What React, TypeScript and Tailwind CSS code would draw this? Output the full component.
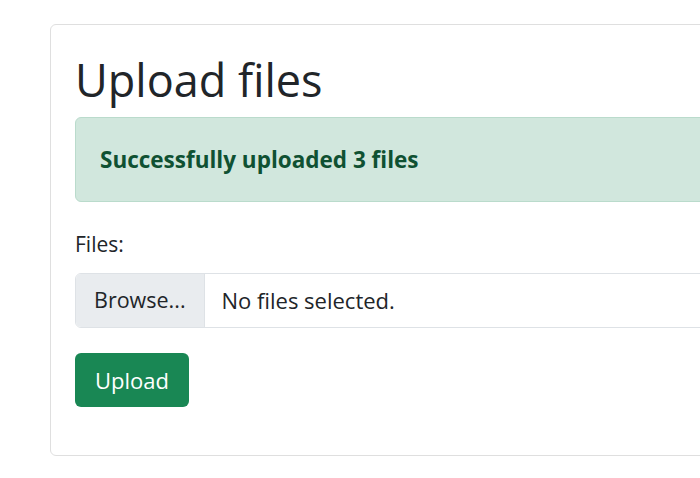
export default function App() {
  return (
    <div className="min-h-screen w-full overflow-hidden bg-white font-['Open_Sans',sans-serif] text-[#212529]">
      <div className="ml-[50px] mt-[24px] w-[720px] rounded-[6px] border border-[#dfdfdf] px-6 pt-[28px] pb-[48px]">
        <h1 className="mb-[10px] text-[45px] leading-[54px] font-normal">Upload files</h1>

        <div className="rounded-[6px] border border-[#badbcc] bg-[#d1e7dd] px-6 py-[27px] text-[22.5px] leading-[29px] font-bold text-[#0f5132]">
          Successfully uploaded 3 files
        </div>

        <form className="mt-[27px]">
          <label className="block text-[21px] leading-[31px]">Files:</label>
          <div className="mt-[13px] flex h-[55px] overflow-hidden rounded-[6px] border border-[#dee2e6] text-[22px]">
            <span className="flex items-center border-r border-[#dee2e6] bg-[#e9ecef] px-[18px] text-[21.5px]">Browse...</span>
            <span className="flex items-center px-[17px]">No files selected.</span>
          </div>
          <button
            type="button"
            className="mt-[25px] flex h-[54px] items-center rounded-[6px] bg-[#198754] px-[20px] text-[22px] text-white"
          >
            Upload
          </button>
        </form>
      </div>
    </div>
  );
}
